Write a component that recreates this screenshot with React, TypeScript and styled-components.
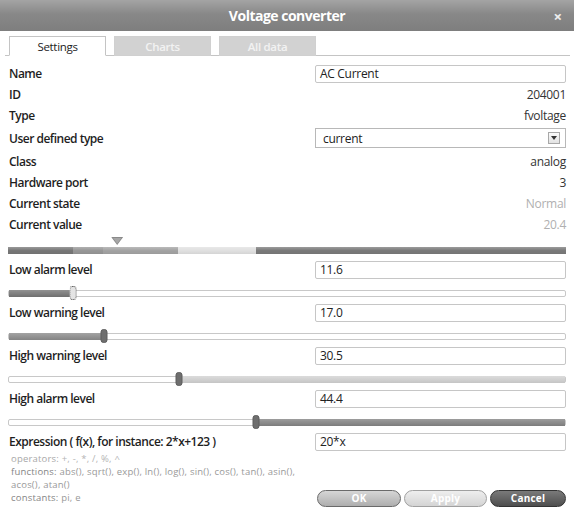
import React from 'react';
import styled, { createGlobalStyle } from 'styled-components';

const GlobalStyle = createGlobalStyle`
  html, body {
    margin: 0;
    padding: 0;
    background: #fff;
  }
  body {
    font-family: 'Open Sans', 'Noto Sans', sans-serif;
  }
`;

const MAX = 100;
const pct = (v: number) => `${(v / MAX) * 100}%`;

const scaleSegments = [
  { from: 0, to: 11.6, color: '#777' },
  { from: 11.6, to: 17.0, color: '#979797' },
  { from: 17.0, to: 30.5, color: '#a3a3a3' },
  { from: 30.5, to: 44.4, color: '#e0e0e0' },
  { from: 44.4, to: 100, color: '#7a7a7a' },
];

type Level = {
  label: string;
  value: number;
  side: 'low' | 'high';
  fill: string;
  focused?: boolean;
};

const levels: Level[] = [
  { label: 'Low alarm level', value: 11.6, side: 'low', fill: '#767676', focused: true },
  { label: 'Low warning level', value: 17.0, side: 'low', fill: '#8c8c8c' },
  { label: 'High warning level', value: 30.5, side: 'high', fill: '#d2d2d2' },
  { label: 'High alarm level', value: 44.4, side: 'high', fill: '#848484' },
];

const App = () => {
  return (
    <>
      <GlobalStyle />
      <Dialog>
        <TitleBar>
          <Title>Voltage converter</Title>
          <Close>×</Close>
        </TitleBar>
        <Tabs>
          <Tab $active>Settings</Tab>
          <Tab>Charts</Tab>
          <Tab>All data</Tab>
        </Tabs>
        <Body>
          <Row>
            <Label>Name</Label>
            <TextBox>AC Current</TextBox>
          </Row>
          <Row>
            <Label>ID</Label>
            <Value>204001</Value>
          </Row>
          <Row>
            <Label>Type</Label>
            <Value>fvoltage</Value>
          </Row>
          <Row $tall>
            <Label>User defined type</Label>
            <SelectBox>
              <SelectText>current</SelectText>
              <SelectButton>
                <svg width="6" height="4" viewBox="0 0 6 4">
                  <path d="M0 0 L6 0 L3 4 Z" fill="#333" />
                </svg>
              </SelectButton>
            </SelectBox>
          </Row>
          <Row>
            <Label>Class</Label>
            <Value>analog</Value>
          </Row>
          <Row>
            <Label>Hardware port</Label>
            <Value>3</Value>
          </Row>
          <Row>
            <Label>Current state</Label>
            <Value $muted>Normal</Value>
          </Row>
          <Row>
            <Label>Current value</Label>
            <Value $muted>20.4</Value>
          </Row>

          <MarkerTrack>
            <Marker style={{ left: pct(20.4) }}>
              <svg width="12" height="8" viewBox="0 0 12 8">
                <path d="M0 0 L12 0 L6 8 Z" fill="#8a8a8a" />
                <path d="M1.8 0.9 L10.2 0.9 L6 6.8 Z" fill="#a6a6a6" />
              </svg>
            </Marker>
          </MarkerTrack>
          <ScaleBar>
            {scaleSegments.map((s, i) => (
              <ScaleSegment
                key={i}
                $color={s.color}
                style={{ width: pct(s.to - s.from) }}
              />
            ))}
          </ScaleBar>

          {levels.map((lv, i) => (
            <React.Fragment key={lv.label}>
              <Row $first={i === 0}>
                <Label>{lv.label}</Label>
                <TextBox>{lv.value.toFixed(1)}</TextBox>
              </Row>
              <SliderRow>
                <Track>
                  <Fill
                    $color={lv.fill}
                    style={
                      lv.side === 'low'
                        ? { left: 0, width: pct(lv.value) }
                        : { left: pct(lv.value), right: 0 }
                    }
                  />
                  <Handle $focused={lv.focused} style={{ left: pct(lv.value) }} />
                </Track>
              </SliderRow>
            </React.Fragment>
          ))}

          <Row>
            <Label>Expression ( f(x), for instance: 2*x+123 )</Label>
            <TextBox>20*x</TextBox>
          </Row>

          <Footer>
            <Help>
              <HelpLine $light>
                <b>operators:</b> +, -, *, /, %, ^
              </HelpLine>
              <HelpLine>
                <b>functions:</b> abs(), sqrt(), exp(), ln(), log(), sin(), cos(), tan(), asin(),
              </HelpLine>
              <HelpLine>acos(), atan()</HelpLine>
              <HelpLine>
                <b>constants:</b> pi, e
              </HelpLine>
            </Help>
            <Buttons>
              <Button $kind="ok">OK</Button>
              <Button $kind="apply">Apply</Button>
              <Button $kind="cancel">Cancel</Button>
            </Buttons>
          </Footer>
        </Body>
      </Dialog>
    </>
  );
};

export default App;

const Dialog = styled.div`
  width: 574px;
  height: 510px;
  background: #fff;
  display: flex;
  flex-direction: column;
  overflow: hidden;
  color: #222;
`;

const TitleBar = styled.div`
  height: 31px;
  flex-shrink: 0;
  display: flex;
  align-items: center;
  justify-content: center;
  position: relative;
  background: linear-gradient(#a4a4a4, #888 45%, #7e7e7e);
`;

const Title = styled.span`
  color: #fff;
  font-size: 14px;
  font-weight: 700;
  letter-spacing: -0.5px;
`;

const Close = styled.span`
  position: absolute;
  right: 12px;
  top: 6px;
  color: #eee;
  font-size: 15px;
  font-weight: 700;
`;

const Tabs = styled.div`
  display: flex;
  flex-shrink: 0;
  gap: 8px;
  margin: 5px 4px 0 5px;
  padding-left: 4px;
  border-bottom: 1px solid #c4c4c4;
`;

const Tab = styled.div<{ $active?: boolean }>`
  width: 97px;
  height: 20px;
  box-sizing: border-box;
  display: flex;
  align-items: center;
  justify-content: center;
  font-size: 11.5px;
  letter-spacing: -0.3px;
  margin-bottom: -1px;
  border: 1px solid ${(p) => (p.$active ? '#c4c4c4' : '#d0d0d0')};
  border-bottom: 1px solid ${(p) => (p.$active ? '#fff' : '#d0d0d0')};
  background: ${(p) => (p.$active ? '#fff' : '#d2d2d2')};
  color: ${(p) => (p.$active ? '#222' : '#f2f2f2')};
  font-weight: ${(p) => (p.$active ? 400 : 600)};
`;

const Body = styled.div`
  flex: 1;
  display: flex;
  flex-direction: column;
  padding: 7px 8px 0 9px;
`;

const Row = styled.div<{ $tall?: boolean; $first?: boolean }>`
  display: grid;
  grid-template-columns: 1fr 251px;
  align-items: center;
  height: ${(p) => (p.$tall ? 24 : 21)}px;
  margin-top: ${(p) => (p.$first ? 5 : 0)}px;
  margin-bottom: ${(p) => (p.$tall ? 1 : 0)}px;
`;

const Label = styled.span`
  font-size: 12px;
  font-weight: 600;
  letter-spacing: -0.5px;
  color: #1e1e1e;
  white-space: nowrap;
`;

const Value = styled.span<{ $muted?: boolean }>`
  text-align: right;
  font-size: 12px;
  letter-spacing: -0.3px;
  color: ${(p) => (p.$muted ? '#b0b0b0' : '#333')};
`;

const TextBox = styled.div`
  height: 18px;
  box-sizing: border-box;
  border: 1px solid #c6c6c6;
  border-radius: 2px;
  padding: 0 4px;
  display: flex;
  align-items: center;
  font-size: 12px;
  letter-spacing: -0.3px;
  color: #222;
`;

const SelectBox = styled.div`
  height: 20px;
  box-sizing: border-box;
  border: 1px solid #b8b8b8;
  display: flex;
  align-items: center;
  justify-content: space-between;
  padding: 0 5px 0 7px;
`;

const SelectText = styled.span`
  font-size: 12px;
  letter-spacing: -0.3px;
  color: #222;
`;

const SelectButton = styled.span`
  width: 12px;
  height: 12px;
  box-sizing: border-box;
  border: 1px solid #a8a8a8;
  background: linear-gradient(#fafafa, #e2e2e2);
  display: flex;
  align-items: center;
  justify-content: center;
`;

const MarkerTrack = styled.div`
  position: relative;
  height: 12px;
  margin-left: -1px;
`;

const Marker = styled.span`
  position: absolute;
  top: 2px;
  transform: translateX(-90%);
  display: flex;
`;

const ScaleBar = styled.div`
  display: flex;
  height: 7px;
  margin-left: -1px;
`;

const ScaleSegment = styled.div<{ $color: string }>`
  height: 100%;
  background: linear-gradient(
    rgba(255, 255, 255, 0.25),
    rgba(255, 255, 255, 0) 50%,
    rgba(0, 0, 0, 0.05)
  ),
  ${(p) => p.$color};
`;

const SliderRow = styled.div`
  height: 22px;
  display: flex;
  align-items: center;
  padding-top: 4px;
  box-sizing: border-box;
  margin-left: -1px;
`;

const Track = styled.div`
  position: relative;
  flex: 1;
  height: 7px;
  box-sizing: border-box;
  border: 1px solid #c8c8c8;
  border-radius: 2px;
  background: #fff;
`;

const Fill = styled.div<{ $color: string }>`
  position: absolute;
  top: -1px;
  bottom: -1px;
  background: linear-gradient(rgba(255, 255, 255, 0.2), rgba(0, 0, 0, 0.06)),
    ${(p) => p.$color};
`;

const Handle = styled.div<{ $focused?: boolean }>`
  position: absolute;
  top: -5px;
  width: 7px;
  height: 14px;
  box-sizing: border-box;
  transform: translateX(-50%);
  border-radius: 3px;
  background: ${(p) => (p.$focused ? '#e4e4e4' : '#6e6e6e')};
  border: 1px ${(p) => (p.$focused ? 'dotted #444' : 'solid #5c5c5c')};
`;

const Footer = styled.div`
  flex: 1;
  display: flex;
  justify-content: space-between;
  align-items: flex-end;
  padding-bottom: 3px;
`;

const Help = styled.div`
  align-self: flex-start;
  padding: 0 0 0 2px;
  font-size: 9.5px;
  letter-spacing: 0.2px;
  line-height: 13px;
  color: #999;
`;

const HelpLine = styled.div<{ $light?: boolean }>`
  white-space: nowrap;
  color: ${(p) => (p.$light ? '#b4b4b4' : '#999')};

  b {
    font-weight: 400;
    color: ${(p) => (p.$light ? '#a8a8a8' : '#858585')};
  }
`;

const Buttons = styled.div`
  display: flex;
  gap: 3px;
`;

const buttonColors = {
  ok: { bg: 'linear-gradient(#d6d6d6, #aeaeae)', border: '#6a6a6a', width: 84 },
  apply: { bg: 'linear-gradient(#eeeeee, #d4d4d4)', border: '#a0a0a0', width: 83 },
  cancel: { bg: 'linear-gradient(#7a7a7a, #4e4e4e)', border: '#333', width: 76 },
};

const Button = styled.button<{ $kind: 'ok' | 'apply' | 'cancel' }>`
  width: ${(p) => buttonColors[p.$kind].width}px;
  height: 17px;
  padding: 0;
  border-radius: 9px;
  border: 1px solid ${(p) => buttonColors[p.$kind].border};
  background: ${(p) => buttonColors[p.$kind].bg};
  color: #fff;
  font-family: 'Open Sans', sans-serif;
  font-size: 10px;
  font-weight: 700;
  letter-spacing: 0.2px;
  line-height: 15px;
`;
